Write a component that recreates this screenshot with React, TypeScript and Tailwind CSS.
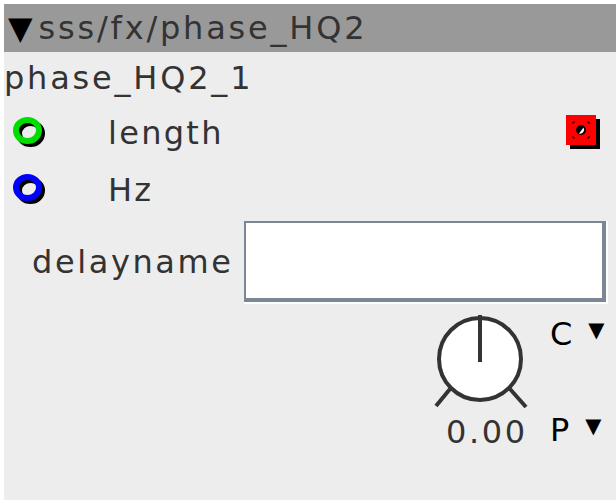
import React from "react";

const font = { fontFamily: '"DejaVu Sans", Verdana, sans-serif' };

function Port({ color }: { color: string }) {
  return (
    <svg width="36" height="36" viewBox="0 0 36 36" className="block">
      <ellipse cx="18.5" cy="18.5" rx="11.5" ry="10.5" fill="none" stroke="#000" strokeWidth="6" />
      <ellipse cx="15.5" cy="15.5" rx="11.5" ry="10.5" fill="none" stroke={color} strokeWidth="6" />
    </svg>
  );
}

function RedPort() {
  return (
    <svg width="36" height="36" viewBox="0 0 36 36" className="block">
      <rect x="4" y="4" width="30" height="30" fill="#000" />
      <rect x="0" y="0" width="30" height="30" fill="#ff0000" />
      <path d="M7 9V7H9M21 7H23V9M23 21V23H21M9 23H7V21" stroke="#000" strokeWidth="1" fill="none" />
      <circle cx="15" cy="15" r="5" fill="#000" />
      <path d="M17.5 12.5 A4 4 0 0 1 13 18.5 Z" fill="#fff" />
    </svg>
  );
}

function Knob() {
  return (
    <svg width="100" height="100" viewBox="0 0 100 100" className="block">
      <circle cx="50" cy="47" r="41" fill="#fff" stroke="#333" strokeWidth="4" />
      <line x1="50" y1="3" x2="50" y2="50" stroke="#333" strokeWidth="4" />
      <line x1="20" y1="77" x2="6" y2="94" stroke="#333" strokeWidth="4" />
      <line x1="80" y1="77" x2="96" y2="95" stroke="#333" strokeWidth="4" />
    </svg>
  );
}

export default function App() {
  return (
    <div className="w-[616px] h-[504px] bg-white pt-1 pl-1 pb-1 overflow-hidden" style={font}>
      <div className="h-full bg-[#ededed] flex flex-col text-[#333333] text-[32px] leading-none">
        <div className="h-[48px] bg-[#999999] flex items-center pl-[4px]">
          <span className="text-black mr-[6px]">▼</span>
          <span className="tracking-[2.8px]">sss/fx/phase_HQ2</span>
        </div>
        <div className="h-[52px] flex items-center pl-0 tracking-[2.8px]">phase_HQ2_1</div>
        <div className="h-[58px] flex items-center pl-[8px]">
          <Port color="#00dd00" />
          <span className="ml-[60px] flex-1 tracking-[2.3px]">length</span>
          <div className="mr-[14px]">
            <RedPort />
          </div>
        </div>
        <div className="h-[56px] flex items-center pl-[8px]">
          <Port color="#0000ff" />
          <span className="ml-[60px] tracking-[2.3px]">Hz</span>
        </div>
        <div className="h-[88px] flex items-center pl-[28px]">
          <span className="mr-[10px] tracking-[2.6px]">delayname</span>
          <div className="border-r-2 border-b-2 border-white">
            <div className="w-[362px] h-[81px] bg-white border-t-2 border-l-2 border-r-4 border-b-4 border-[#7b8794]" />
          </div>
        </div>
        <div className="flex pl-[426px] pt-[6px]">
          <div className="flex flex-col items-start">
            <Knob />
            <div className="mt-[4px] ml-[16px] tracking-[2.6px]">0.00</div>
          </div>
          <div className="flex flex-col ml-[20px] text-black">
            <div className="flex items-start mt-[6px]">
              <span>C</span>
              <span className="text-[21px] ml-[16px] mt-[2px]">▼</span>
            </div>
            <div className="flex items-start mt-[64px]">
              <span>P</span>
              <span className="text-[21px] ml-[16px] mt-[2px]">▼</span>
            </div>
          </div>
        </div>
      </div>
    </div>
  );
}
